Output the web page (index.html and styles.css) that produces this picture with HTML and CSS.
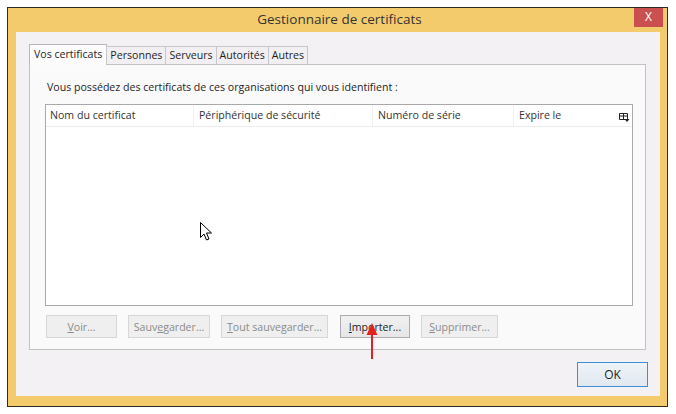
FILE: index.html
```html
<!DOCTYPE html>
<html lang="fr">
<head>
<meta charset="utf-8">
<title>Gestionnaire de certificats</title>
<link rel="stylesheet" href="styles.css">
</head>
<body>
<div class="window">
  <div class="titlebar">
    <span></span>
    <span class="title">Gestionnaire de certificats</span>
    <span class="close">X</span>
  </div>
  <div class="client">
    <div class="tabs">
      <span class="tab active">Vos certificats</span>
      <span class="tab">Personnes</span>
      <span class="tab">Serveurs</span>
      <span class="tab">Autorités</span>
      <span class="tab">Autres</span>
    </div>
    <div class="panel">
      <div class="intro">Vous possédez des certificats de ces organisations qui vous identifient :</div>
      <div class="list">
        <div class="list-head">
          <span class="col c1">Nom du certificat</span>
          <span class="col c2">Périphérique de sécurité</span>
          <span class="col c3">Numéro de série</span>
          <span class="col c4">Expire le</span>
          <span class="col c5"><svg width="11" height="9" viewBox="0 0 11 9"><path d="M0.5 0.5h8v6h-8z M0.5 3h8 M4.5 0.5v6" fill="none" stroke="#222" stroke-width="1"/><path d="M5.5 6h5l-2.5 3z" fill="#222"/></svg></span>
        </div>
        <div class="list-body"></div>
      </div>
      <div class="actions">
        <button class="btn disabled b-voir"><u>V</u>oir...</button>
        <button class="btn disabled b-sauv">Sauv<u>e</u>garder...</button>
        <button class="btn disabled b-tout"><u>T</u>out sauvegarder...</button>
        <button class="btn b-imp"><u>I</u>mporter...</button>
        <button class="btn disabled b-sup"><u>S</u>upprimer...</button>
      </div>
    </div>
    <div class="footer">
      <button class="btn ok">OK</button>
    </div>
  </div>
</div>
<svg class="cursor" width="13" height="20" viewBox="0 0 13 20"><path d="M0.5 0.5v15l3.5-3.5 2.5 6 2.5-1-2.5-6h5z" fill="#fff" stroke="#000" stroke-width="1" stroke-linejoin="miter"/></svg>
<svg class="arrow" width="14" height="36" viewBox="0 0 14 36"><path d="M7 0L1.5 12h11z" fill="#e2211c"/><rect x="6" y="10" width="2" height="26" fill="#e2211c"/></svg>
</body>
</html>
```
FILE: styles.css
```css
* { box-sizing: border-box; }
html, body { margin: 0; padding: 0; background: #ffffff; }
body {
  position: relative;
  width: 676px;
  height: 414px;
  padding: 7px 0 0 7px;
  font-family: "Open Sans", "Noto Sans", sans-serif;
  font-size: 10.6px;
  color: #1e1e1e;
}
.window {
  width: 661px;
  height: 400px;
  border: 1px solid #2e2a22;
  background: #f3cb6c;
  display: flex;
  flex-direction: column;
}
.titlebar {
  height: 24px;
  display: grid;
  grid-template-columns: 1fr auto 1fr;
  align-items: start;
}
.title {
  font-size: 13.5px;
  line-height: 23px;
  color: #333;
  padding-left: 4px;
}
.close {
  justify-self: end;
  margin-right: 4px;
  width: 29px;
  height: 19px;
  background: #c9504e;
  color: #fff;
  font-size: 12px;
  line-height: 18px;
  text-align: center;
}
.client {
  flex: 1;
  margin: 0 7px 10px 8px;
  background: #f4f1f4;
  padding: 12px 14px 0 13px;
  display: flex;
  flex-direction: column;
}
.tabs {
  display: flex;
  align-items: flex-end;
  height: 20px;
  position: relative;
  z-index: 1;
}
.tab {
  height: 18px;
  line-height: 16px;
  padding: 0 3px;
  border: 1px solid #c8c6c8;
  border-bottom: none;
  background: #f2eff2;
  margin-left: -1px;
  color: #1e1e1e;
}
.tab.active {
  line-height: 18px;
  background: #fcfcfc;
  margin-left: 0;
  padding: 0 4px;
  border-color: #b9b7b9;
  margin-bottom: -1px;
  height: 21px;
}
.panel {
  width: 617px;
  height: 286px;
  border: 1px solid #c3c1c3;
  background: #fbfafb;
  padding: 14px 12px 11px 15px;
  display: flex;
  flex-direction: column;
}
.intro {
  line-height: 16px;
  height: 16px;
  margin-bottom: 9px;
  margin-left: 2px;
}
.list {
  width: 588px;
  height: 202px;
  border: 1px solid #a9a9a9;
  background: #ffffff;
  display: flex;
  flex-direction: column;
}
.list-head {
  height: 22px;
  display: flex;
  border-bottom: 1px solid #ececec;
  color: #333;
}
.col {
  line-height: 21px;
  padding-left: 4px;
  border-right: 1px solid #f0f0f0;
  white-space: nowrap;
}
.c1 { width: 148px; }
.c2 { width: 179px; padding-left: 5px; }
.c3 { width: 141px; padding-left: 5px; }
.c4 { width: 100px; padding-left: 5px; border-right: none; }
.c5 { border-right: none; padding-left: 5px; padding-top: 1px; }
.c5 svg { vertical-align: middle; }
.list-body { flex: 1; }
.actions {
  display: flex;
  margin-top: 9px;
}
.btn {
  font-family: inherit;
  font-size: 10.6px;
  height: 23px;
  padding: 0;
  border: 1px solid #acacac;
  background: linear-gradient(#f1f1f1, #e6e6e6);
  color: #1e1e1e;
  text-align: center;
}
.btn.disabled {
  border-color: #d7d7d7;
  background: #efefef;
  color: #8b8b8b;
}
.b-voir { width: 71px; margin-left: 1px; }
.b-sauv { width: 82px; margin-left: 11px; }
.b-tout { width: 107px; margin-left: 11px; }
.b-imp { width: 70px; margin-left: 12px; }
.b-sup { width: 77px; margin-left: 11px; }
.footer {
  display: flex;
  justify-content: flex-end;
  padding-top: 12px;
}
.ok {
  width: 71px;
  height: 25px;
  font-size: 12px;
  border-color: #3c8fd6;
  background: linear-gradient(#eef3f8, #e1e8ef);
  margin-right: -2px;
}
.cursor {
  position: absolute;
  left: 200px;
  top: 222px;
}
.arrow {
  position: absolute;
  left: 365px;
  top: 323px;
}
```
